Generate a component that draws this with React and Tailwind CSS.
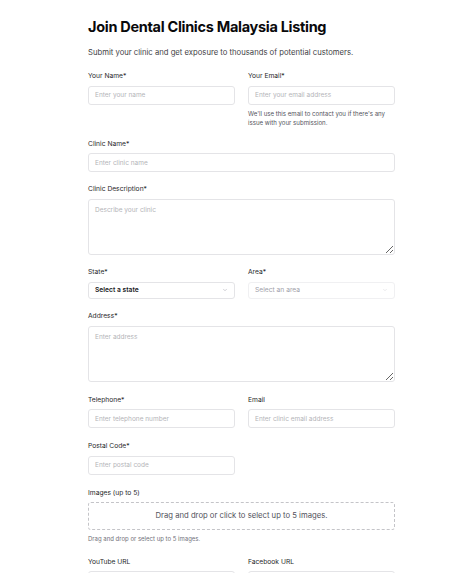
export default function App() {
  const font = { fontFamily: 'Inter, "Noto Sans", sans-serif' };
  const input =
    'block w-full h-[19px] rounded-[3px] border border-[#e4e4e7] bg-white px-[6px] text-[6.5px] text-[#18181b] placeholder:text-[#b4b4b8] outline-none';
  const area =
    'block w-full h-[56px] resize-y rounded-[3px] border border-[#e4e4e7] bg-white px-[6px] py-[6px] text-[6.5px] leading-[9px] text-[#18181b] placeholder:text-[#b4b4b8] outline-none';
  const label = 'block text-[6.7px] text-[#27272a] mb-[4.5px] leading-[10px]';

  return (
    <div className="min-h-screen bg-white leading-none" style={font}>
      <div className="ml-[88px] w-[307px] pt-[16.5px] pb-[20px]">
        <h1 className="text-[14.5px] font-bold text-[#09090b] leading-[20px] tracking-[-0.3px]">
          Join Dental Clinics Malaysia Listing
        </h1>
        <p className="mt-[10px] text-[7.7px] text-[#3f3f46] leading-[12px]">
          Submit your clinic and get exposure to thousands of potential customers.
        </p>

        <div className="mt-[12.5px] grid grid-cols-2 gap-x-[13px]">
          <div>
            <label className={label}>Your Name*</label>
            <input className={input} placeholder="Enter your name" />
          </div>
          <div>
            <label className={label}>Your Email*</label>
            <input className={input} placeholder="Enter your email address" />
            <p className="mt-[4px] text-[6.1px] leading-[9px] text-[#52525b]">
              We'll use this email to contact you if there's any issue with your submission.
            </p>
          </div>
        </div>

        <div className="mt-[12px]">
          <label className={label}>Clinic Name*</label>
          <input className={input} placeholder="Enter clinic name" />
        </div>

        <div className="mt-[12px]">
          <label className={label}>Clinic Description*</label>
          <textarea className={area} placeholder="Describe your clinic" />
        </div>

        <div className="mt-[12.5px] grid grid-cols-2 gap-x-[13px]">
          <div>
            <label className={label}>State*</label>
            <div className="flex h-[17px] items-center justify-between rounded-[3px] border border-[#e4e4e7] px-[6px]">
              <span className="text-[6.7px] font-semibold text-[#18181b]">Select a state</span>
              <Chevron />
            </div>
          </div>
          <div>
            <label className={label}>Area*</label>
            <div className="flex h-[17px] items-center justify-between rounded-[3px] border border-[#f0f0f2] px-[6px]">
              <span className="text-[6.7px] text-[#a1a1aa]">Select an area</span>
              <Chevron light />
            </div>
          </div>
        </div>

        <div className="mt-[12.5px]">
          <label className={label}>Address*</label>
          <textarea className={area} placeholder="Enter address" />
        </div>

        <div className="mt-[13px] grid grid-cols-2 gap-x-[13px]">
          <div>
            <label className={label}>Telephone*</label>
            <input className={input} placeholder="Enter telephone number" />
          </div>
          <div>
            <label className={label}>Email</label>
            <input className={input} placeholder="Enter clinic email address" />
          </div>
        </div>

        <div className="mt-[13px] grid grid-cols-2 gap-x-[13px]">
          <div>
            <label className={label}>Postal Code*</label>
            <input className={input} placeholder="Enter postal code" />
          </div>
        </div>

        <div className="mt-[13px]">
          <label className={label}>Images (up to 5)</label>
          <div className="flex h-[28px] items-center justify-center rounded-[3px] border border-dashed border-[#c4c4c8]">
            <span className="text-[7.7px] text-[#52525b]">
              Drag and drop or click to select up to 5 images.
            </span>
          </div>
          <p className="mt-[5px] text-[6px] leading-[8px] text-[#71717a]">
            Drag and drop or select up to 5 images.
          </p>
        </div>

        <div className="mt-[13.5px] grid grid-cols-2 gap-x-[13px]">
          <div>
            <label className={label}>YouTube URL</label>
            <input className={input} placeholder="Enter YouTube URL" />
          </div>
          <div>
            <label className={label}>Facebook URL</label>
            <input className={input} placeholder="Enter Facebook URL" />
          </div>
        </div>
      </div>
    </div>
  );
}

function Chevron({ light }) {
  return (
    <svg width="6" height="6" viewBox="0 0 24 24" fill="none" stroke={light ? '#d4d4d8' : '#a1a1aa'} strokeWidth="2" strokeLinecap="round" strokeLinejoin="round">
      <path d="m6 9 6 6 6-6" />
    </svg>
  );
}
